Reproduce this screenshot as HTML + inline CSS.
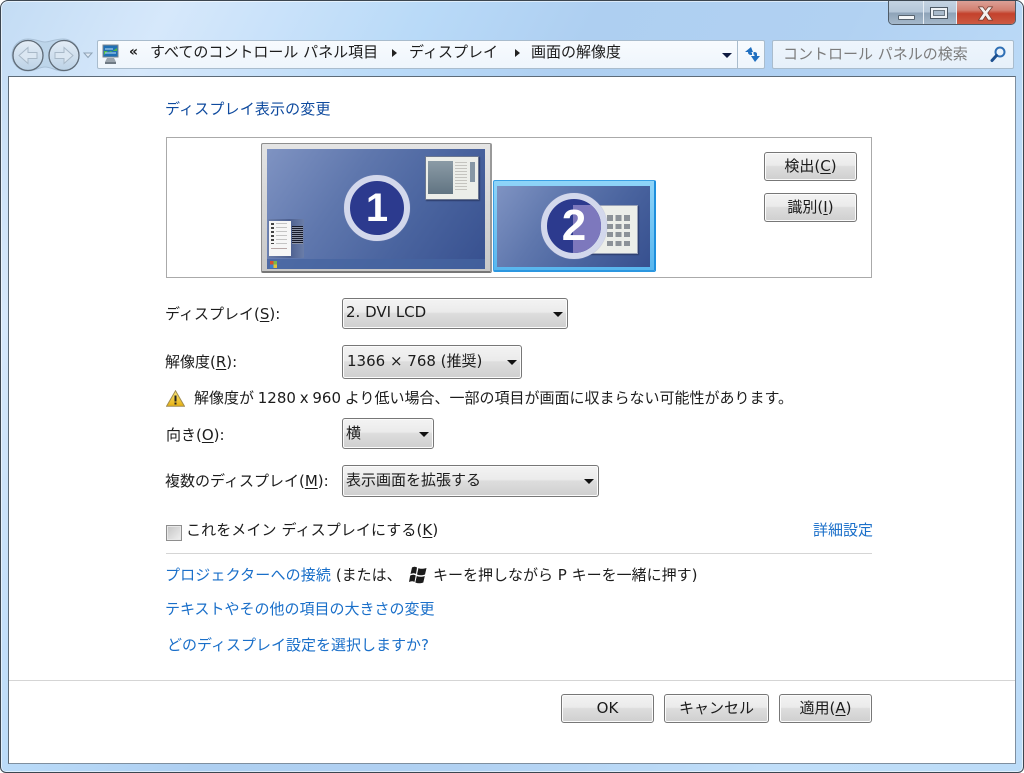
<!DOCTYPE html>
<html lang="ja"><head><meta charset="utf-8"><title>画面の解像度</title>
<style>
*{box-sizing:border-box}
html,body{margin:0;padding:0;background:#fff;width:1024px;height:773px;overflow:hidden}
body{position:relative;font-family:"DejaVu Sans","Liberation Sans","Noto Sans CJK JP",sans-serif;font-size:15px;color:#1c1c1c}
.a{position:absolute}
.t{position:absolute;white-space:nowrap;line-height:20px}
.l{color:#1a6fc9}
.btn,.sel{position:absolute;border:1px solid #777;border-radius:3px;background:linear-gradient(#f3f3f3 0,#ebebeb 45%,#dddddd 50%,#cfcfcf 100%);box-shadow:inset 0 0 0 1px #fbfbfb;text-align:center;color:#1c1c1c;white-space:nowrap}
.sel{text-align:left}
.sel span{position:absolute;left:4px;top:4px;line-height:20px}
.sel i{position:absolute;top:50%;margin-top:-2px;border:5px solid transparent;border-top:5px solid #111;border-bottom:0}
u{text-underline-offset:2px}
</style></head><body>
<div class="a" style="inset:0;border:1px solid #3c4650;border-radius:8px 8px 6px 6px;background:linear-gradient(118deg,#c3dcf4 0,#d6e8fb 12%,#b9daf8 30%,#aecff1 42%,#b1d1f2 60%,#c0def9 82%,#bcdcf8 100%);box-shadow:inset 0 0 0 1px rgba(255,255,255,.55)"></div>
<div class="a" style="left:8px;top:76px;width:1008px;height:688px;background:#fff;border:1px solid #5d6b78;border-bottom-color:#7f8f9f;border-right-color:#7f8f9f"></div>

<!-- caption buttons -->
<div class="a" style="left:888px;top:1px;width:128px;height:24px;border:1px solid #4f5b67;border-top:0;border-radius:0 0 5px 5px;overflow:hidden;display:flex">
<div style="width:35px;background:linear-gradient(#c4d3e2,#b4c6d8 48%,#8ea3b8 52%,#a5b8ca);border-right:1px solid #e6edf4;position:relative"><div class="a" style="left:9px;top:14px;width:17px;height:5px;background:#f2f5f8;border:1px solid #56626e;border-radius:1px"></div></div>
<div style="width:33px;background:linear-gradient(#c4d3e2,#b4c6d8 48%,#8ea3b8 52%,#a5b8ca);border-right:1px solid #e6edf4;position:relative"><div class="a" style="left:6px;top:6px;width:18px;height:12px;border:1px solid #4c5864;background:#eef2f6"><div style="margin:2px;height:6px;border:1px solid #6b7884;background:#a9bacb"></div></div></div>
<div style="flex:1;background:linear-gradient(#dca096,#d27f70 40%,#c3412c 55%,#cc5a42 100%);position:relative"><svg class="a" style="left:18px;top:5px" width="21" height="15" viewBox="0 0 22 17"><path d="M3 1h5l3 4 3-4h5l-5.500 7 5.500 8h-5l-3-4.500-3 4.500H3l5.500-8z" fill="#f4f0ee" stroke="#6b3a30" stroke-width=".8"/></svg></div>
</div>

<!-- nav buttons -->
<svg class="a" style="left:10px;top:36px" width="88" height="38" viewBox="0 0 88 38">
<path d="M18 3c8 0 12 3 17 3s10-3 18-3c9 0 16 7 16 16s-7 16-16 16c-7 0-12-4-18-4s-10 4-17 4C9 35 2 28 2 19S9 3 18 3z" fill="#bdd5ea" stroke="#a9c0d6"/>
<defs><linearGradient id="g" x1="0" y1="0" x2="0" y2="1"><stop offset="0" stop-color="#e4edf6"/><stop offset="1" stop-color="#bcd2e6"/></linearGradient></defs>
<circle cx="18" cy="19.500" r="15" fill="url(#g)" stroke="#5f6b77" stroke-width="1.300"/>
<circle cx="54" cy="19.500" r="15" fill="url(#g)" stroke="#5f6b77" stroke-width="1.300"/>
<path d="M27 16.500h-9v-5l-9 8 9 8v-5h9z" fill="#dbe7f2" stroke="#a9b9c8"/>
<path d="M45 16.500h9v-5l9 8-9 8v-5h-9z" fill="#dbe7f2" stroke="#a9b9c8"/>
<path d="M74 17h8l-4 4.500z" fill="#dfeaf5" stroke="#8fa3b6"/>
</svg>

<!-- address bar -->
<div class="a" style="left:97px;top:40px;width:668px;height:29px;background:linear-gradient(#f8fbfe,#eef5fc);border:1px solid #a9bccd;border-radius:2px"></div>
<div class="a" style="left:737px;top:41px;width:1px;height:27px;background:#a9bccd"></div>
<svg class="a" style="left:102px;top:44px" width="18" height="21" viewBox="0 0 18 21"><path d="M1 1h15v12H1z" fill="#1f6fb5" stroke="#7d8791"/><path d="M2 11l4-4 3 1 6-4v3H2z" fill="#4fb84a"/><path d="M3 5h8M3 9h11" stroke="#bfe0f5"/><path d="M5 14h7l2 4H3z" fill="#9aa4ad"/><path d="M3 18h11v2H3z" fill="#6f7a84"/></svg>
<div class="t" style="left:129px;top:42px;font-size:14px;font-weight:bold">«</div>
<div class="t" style="left:150px;top:42px">すべてのコントロール パネル項目</div>
<div class="a" style="left:392px;top:49px;border:4.500px solid transparent;border-left:5px solid #222;border-right:0"></div>
<div class="t" style="left:409px;top:42px">ディスプレイ</div>
<div class="a" style="left:515px;top:49px;border:4.500px solid transparent;border-left:5px solid #222;border-right:0"></div>
<div class="t" style="left:531px;top:42px">画面の解像度</div>
<div class="a" style="left:722px;top:53px;border:5px solid transparent;border-top:5px solid #0e1a40;border-bottom:0"></div>
<svg class="a" style="left:742px;top:46px" width="20" height="17" viewBox="0 0 20 17"><path d="M9 1L3 6h3v0c0 2 1 3 4 3V6.500C9 6.500 8.500 6 8.500 6H11z" fill="#1f6fc0"/><path d="M13 16l5-6h-3V8c0-1.500-1-2-3.500-2v2.500c1 0 1 .5 1 1.500H9z" fill="#1f6fc0"/></svg>

<!-- search -->
<div class="a" style="left:772px;top:40px;width:242px;height:29px;background:linear-gradient(#eef5fc,#e6f0fa);border:1px solid #a9bccd;border-radius:2px"></div>
<div class="t" style="left:783px;top:44px;color:#7c7c7c">コントロール パネルの検索</div>
<svg class="a" style="left:990px;top:45px" width="17" height="18" viewBox="0 0 17 18"><circle cx="10" cy="7" r="4.500" fill="none" stroke="#2f6fb5" stroke-width="2"/><path d="M6.500 10.500L2 15.500" stroke="#1c4f8f" stroke-width="3" stroke-linecap="round"/></svg>

<!-- heading -->
<div class="t" style="left:165px;top:99px;color:#0e4a9e;letter-spacing:.15px">ディスプレイ表示の変更</div>

<!-- preview box -->
<div class="a" style="left:166px;top:137px;width:706px;height:141px;border:1px solid #aaa;background:#fff"></div>

<!-- monitor 1 -->
<div class="a" style="left:261px;top:143px;width:231px;height:130px;background:linear-gradient(#e4e4e4,#c8c8c8);border:1px solid #8e8e8e;border-bottom:2px solid #777;border-right:2px solid #999;border-radius:2px"></div>
<div class="a" style="left:267px;top:149px;width:218px;height:120px;background:linear-gradient(125deg,#7f93c2 0,#5f77ad 35%,#4a649f 65%,#37508f 100%)"></div>
<div class="a" style="left:267px;top:259px;width:218px;height:10px;background:rgba(70,100,160,.75)"></div>
<div class="a" style="left:425px;top:156px;width:54px;height:44px;background:#eceee9;border:1px solid #6b7790;box-shadow:1px 1px 1px #2d3c6b"></div>
<div class="a" style="left:428px;top:161px;width:25px;height:33px;background:linear-gradient(#8b9ba6,#617482)"></div>
<div class="a" style="left:455px;top:162px;width:12px;height:30px;background:repeating-linear-gradient(#c4c4bf 0 1px,#eceee9 1px 3px)"></div>
<div class="a" style="left:470px;top:162px;width:5px;height:20px;background:#8697a5"></div>
<div class="a" style="left:268px;top:219px;width:36px;height:39px;background:linear-gradient(90deg,#6a7da8,#4d6090 60%,#6a7da8);border-radius:1px"></div>
<div class="a" style="left:269px;top:221px;width:22px;height:35px;background:#f6f6f6"></div>
<div class="a" style="left:271px;top:223px;width:3px;height:21px;background:repeating-linear-gradient(#444 0 2px,#f6f6f6 2px 4px)"></div>
<div class="a" style="left:276px;top:223px;width:11px;height:21px;background:repeating-linear-gradient(#c4c4c4 0 1px,#f6f6f6 1px 4px)"></div>
<div class="a" style="left:271px;top:248px;width:16px;height:1px;background:#b8a8a8"></div>
<div class="a" style="left:292px;top:226px;width:11px;height:18px;background:repeating-linear-gradient(#15192a 0 1px,#8b92a6 1px 2px)"></div>
<div class="a" style="left:270px;top:261px;width:7px;height:7px;background:conic-gradient(#7db84a 0 25%,#e2c23a 0 50%,#3c7fd0 0 75%,#d8502c 0)"></div>
<div class="a" style="left:344px;top:175px;width:66px;height:66px;border-radius:50%;background:#2c3a8e;border:6px solid #d3d8ec;box-shadow:0 0 1px #8891be"></div>
<div class="a" style="left:344px;top:175px;width:66px;height:66px;line-height:66px;text-align:center;color:#fff;font-weight:bold;font-size:40px;font-family:'Liberation Sans',sans-serif">1</div>

<!-- monitor 2 -->
<div class="a" style="left:493px;top:180px;width:163px;height:92px;background:linear-gradient(#8fd4f8,#58b6ee);border:1px solid #3aa0e4;border-right:2px solid #1f8fdc;border-bottom:2px solid #2b97e0;border-radius:2px"></div>
<div class="a" style="left:497px;top:186px;width:153px;height:81px;background:linear-gradient(125deg,#7f93c2 0,#5f77ad 35%,#4a649f 65%,#37508f 100%)"></div>
<div class="a" style="left:573px;top:205px;width:65px;height:49px;background:#eceee9;border:1px solid #9aa3b8;box-shadow:1px 1px 1px #2d3c6b"></div>
<svg class="a" style="left:606px;top:214px" width="32" height="36" viewBox="0 0 32 36"><g fill="#8c9298"><path d="M1 1h6v6H1zM9.500 1h6v6h-6zM18 1h6v6h-6zM1 10h6v5H1zM9.500 10h6v5h-6zM18 10h6v5h-6zM1 18h6v5H1zM9.500 18h6v5h-6zM18 18h6v5h-6zM1 27h6v5H1zM9.500 27h6v5h-6zM18 27h6v5h-6z"/></g></svg>
<div class="a" style="left:541px;top:193px;width:66px;height:66px;border-radius:50%;border:6px solid #d3d8ec;background:#2c3a8e;overflow:hidden;box-shadow:0 0 1px #8891be"><div class="a" style="left:26px;top:6px;width:30px;height:50px;background:#7d78bd"></div></div>
<div class="a" style="left:541px;top:193px;width:66px;height:66px;line-height:66px;text-align:center;color:#fff;font-weight:bold;font-size:44px;font-family:'Liberation Sans',sans-serif">2</div>

<!-- side buttons -->
<div class="btn" style="left:764px;top:152px;width:93px;height:29px;line-height:27px">検出(<u>C</u>)</div>
<div class="btn" style="left:764px;top:193px;width:93px;height:29px;line-height:27px">識別(<u>I</u>)</div>

<!-- form -->
<div class="t" style="left:165px;top:304px">ディスプレイ(<u>S</u>):</div>
<div class="sel" style="left:342px;top:298px;width:226px;height:31px"><span style="left:3px;top:3px">2. DVI LCD</span><i style="right:4px"></i></div>
<div class="t" style="left:165px;top:352px">解像度(<u>R</u>):</div>
<div class="sel" style="left:342px;top:345px;width:180px;height:34px"><span style="top:5px">1366 × 768 (推奨)</span><i style="right:4px"></i></div>
<svg class="a" style="left:166px;top:390px" width="19" height="17" viewBox="0 0 19 17"><defs><linearGradient id="w" x1="0" y1="0" x2="0" y2="1"><stop offset="0" stop-color="#fbe87a"/><stop offset="1" stop-color="#e6b010"/></linearGradient></defs><path d="M9.500 .8L18.500 16.200H.5z" fill="url(#w)" stroke="#a08c50"/><path d="M8.500 5.500h2v6h-2zM8.500 12.500h2v2h-2z" fill="#222"/></svg>
<div class="t" style="left:194px;top:388px;word-spacing:-1px">解像度が 1280 x 960 より低い場合、一部の項目が画面に収まらない可能性があります。</div>
<div class="t" style="left:166px;top:425px">向き(<u>O</u>):</div>
<div class="sel" style="left:342px;top:418px;width:92px;height:31px"><span style="left:3px;top:4px">横</span><i style="right:4px"></i></div>
<div class="t" style="left:165px;top:471px">複数のディスプレイ(<u>M</u>):</div>
<div class="sel" style="left:342px;top:465px;width:257px;height:32px"><span style="left:3px;top:4px">表示画面を拡張する</span><i style="right:4px"></i></div>

<div class="a" style="left:166px;top:525px;width:16px;height:16px;border:1px solid #8e8e8e;background:linear-gradient(135deg,#c4c4c4,#f0f0f0);box-shadow:inset 0 0 0 1px #e8e8e8"></div>
<div class="t" style="left:186px;top:520px;letter-spacing:.1px">これをメイン ディスプレイにする(<u>K</u>)</div>
<div class="t l" style="left:813px;top:520px">詳細設定</div>
<div class="a" style="left:166px;top:553px;width:706px;height:1px;background:#d5d5d5"></div>

<div class="t" style="left:165px;top:565px"><span class="l" style="letter-spacing:.15px">プロジェクターへの接続</span> (または、</div>
<svg class="a" style="left:408px;top:566px" width="20" height="18" viewBox="0 0 20 18"><path d="M4 1.500c2-1 3.500-1 5 0L8 8C6.500 7 4.500 7 2.500 8zM10.500 2c1.500 1 4 1 8 0L17 8.500c-3 1-5.500 1-8 0zM2.200 9.500c2-1 4-1 5.500 0L6.500 16c-1.500-1-3.500-1-5.500 0zM8.800 10c2.500 1 5 1 8 0l-1.500 6.500c-3 1-5.500 1-8 0z" fill="#1b1b1b"/></svg>
<div class="t" style="left:433px;top:565px">キーを押しながら P キーを一緒に押す)</div>
<div class="t l" style="left:165px;top:599px">テキストやその他の項目の大きさの変更</div>
<div class="t l" style="left:167px;top:635px">どのディスプレイ設定を選択しますか?</div>

<div class="a" style="left:9px;top:680px;width:1006px;height:1px;background:#d5d5d5"></div>
<div class="btn" style="left:561px;top:694px;width:93px;height:29px;line-height:27px">OK</div>
<div class="btn" style="left:664px;top:694px;width:105px;height:29px;line-height:27px">キャンセル</div>
<div class="btn" style="left:779px;top:694px;width:93px;height:29px;line-height:27px">適用(<u>A</u>)</div>
</body></html>
